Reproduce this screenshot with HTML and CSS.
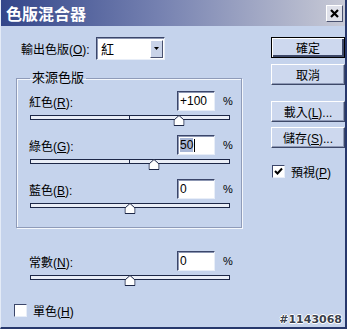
FILE: index.html
```html
<!DOCTYPE html>
<html lang="zh-Hant">
<head>
    <meta charset="UTF-8">
    <meta name="viewport" content="width=device-width, initial-scale=1.0">
    <title>色版混合器</title>
    <link rel="stylesheet" href="styles.css">
</head>
<body>

    <div class="window">
        <div class="titlebar">
            <span class="title">色版混合器</span>
            <span class="close">
                <svg width="9" height="9" viewBox="0 0 9 9"><path d="M1 1 L8 8 M8 1 L1 8" stroke="#000" stroke-width="2.2"/></svg>
            </span>
        </div>

        <div class="content">
            <div class="left">
                <div class="out-row">
                    <span class="out-label">輸出色版(<u>O</u>):</span>
                    <div class="select">
                        <span class="select-value">紅</span>
                        <span class="select-arrow">
                            <svg width="5" height="3" viewBox="0 0 5 3"><path d="M0 0 H5 L2.5 3 Z" fill="#000"/></svg>
                        </span>
                    </div>
                </div>

                <fieldset class="group">
                    <legend>來源色版</legend>

                    <div class="channel">
                        <div class="channel-row">
                            <span class="channel-label">紅色(<u>R</u>):</span>
                            <span class="field">+100</span>
                            <span class="pct">%</span>
                        </div>
                        <div class="slider">
                            <span class="tick"></span>
                            <span class="thumb" style="left: 74.5%"><svg width="11" height="11" viewBox="0 0 11 11"><path d="M5.5 0.5 L10.5 5 V10.5 H0.5 V5 Z" fill="#fff" stroke="#1d2747"/></svg></span>
                        </div>
                    </div>

                    <div class="channel">
                        <div class="channel-row">
                            <span class="channel-label">綠色(<u>G</u>):</span>
                            <span class="field"><span class="selected">50</span><span class="caret"></span></span>
                            <span class="pct">%</span>
                        </div>
                        <div class="slider">
                            <span class="tick"></span>
                            <span class="thumb" style="left: 62%"><svg width="11" height="11" viewBox="0 0 11 11"><path d="M5.5 0.5 L10.5 5 V10.5 H0.5 V5 Z" fill="#fff" stroke="#1d2747"/></svg></span>
                        </div>
                    </div>

                    <div class="channel">
                        <div class="channel-row">
                            <span class="channel-label">藍色(<u>B</u>):</span>
                            <span class="field">0</span>
                            <span class="pct">%</span>
                        </div>
                        <div class="slider">
                            <span class="thumb" style="left: 50%"><svg width="11" height="11" viewBox="0 0 11 11"><path d="M5.5 0.5 L10.5 5 V10.5 H0.5 V5 Z" fill="#fff" stroke="#1d2747"/></svg></span>
                        </div>
                    </div>
                </fieldset>

                <div class="channel constant">
                    <div class="channel-row">
                        <span class="channel-label">常數(<u>N</u>):</span>
                        <span class="field">0</span>
                        <span class="pct">%</span>
                    </div>
                    <div class="slider">
                        <span class="thumb" style="left: 50%"><svg width="11" height="11" viewBox="0 0 11 11"><path d="M5.5 0.5 L10.5 5 V10.5 H0.5 V5 Z" fill="#fff" stroke="#1d2747"/></svg></span>
                    </div>
                </div>

                <div class="check mono">
                    <span class="box"></span>
                    <span>單色(<u>H</u>)</span>
                </div>
            </div>

            <div class="right">
                <button class="btn default">確定</button>
                <button class="btn cancel">取消</button>
                <button class="btn load">載入(<u>L</u>)...</button>
                <button class="btn save">儲存(<u>S</u>)...</button>
                <div class="check preview">
                    <span class="box">
                        <svg width="9" height="9" viewBox="0 0 9 9"><path d="M1 4 L3.5 6.5 L8 1.5" stroke="#000" stroke-width="2" fill="none"/></svg>
                    </span>
                    <span>預視(<u>P</u>)</span>
                </div>
            </div>
        </div>

        <span class="watermark">#1143068</span>
    </div>

</body>
</html>
```

FILE: styles.css
```css
body {
    margin: 0;
    overflow: hidden;
    font-family: "Liberation Sans", "Noto Sans CJK TC", sans-serif;
    font-size: 12px;
    color: #000;
}

.window {
    position: relative;
    width: 347px;
    height: 329px;
    box-sizing: border-box;
    background: #c5d3ec;
    border-left: 1px solid #e4ebf7;
    border-right: 2px solid #27386c;
    border-bottom: 2px solid #27386c;
    display: flex;
    flex-direction: column;
}

.titlebar {
    height: 26px;
    flex: none;
    display: flex;
    align-items: center;
    justify-content: space-between;
    padding: 0 2px 0 5px;
    background: linear-gradient(to right, #33468a, #7480b0 45%, #c8cad6);
}

.title {
    color: #fff;
    font-size: 16px;
    font-weight: bold;
}

.close {
    width: 17px;
    height: 17px;
    box-sizing: border-box;
    display: flex;
    align-items: center;
    justify-content: center;
    background: #dfe1ea;
    border: 1px solid;
    border-color: #fff #4a5270 #4a5270 #fff;
}

.content {
    display: flex;
    padding-top: 11px;
}

.left {
    width: 246px;
    padding-left: 12px;
}

/* output channel row */
.out-row {
    display: flex;
    align-items: center;
    margin-left: 8px;
}

.out-label {
    width: 75px;
}

.select {
    width: 69px;
    height: 23px;
    box-sizing: border-box;
    display: flex;
    align-items: center;
    justify-content: space-between;
    background: #fff;
    border: 1px solid;
    border-color: #3b466a #e8eef8 #e8eef8 #3b466a;
    box-shadow: inset 1px 1px 0 #8c96b2;
    padding: 0 1px 0 4px;
}

.select-value {
    font-size: 13px;
}

.select-arrow {
    width: 13px;
    height: 18px;
    box-sizing: border-box;
    display: flex;
    align-items: center;
    justify-content: center;
    background: #c9d3e8;
    border: 1px solid;
    border-color: #fff #4a5270 #4a5270 #fff;
}

/* group box */
.group {
    margin: 11px 0 0 3px;
    width: 226px;
    box-sizing: border-box;
    padding: 6px 0 19px 12px;
    border: 1px solid #8f9bb9;
    box-shadow: inset 1px 1px 0 #f4f7fc, 1px 1px 0 #f4f7fc;
}

.group legend {
    padding: 0 2px;
    margin-left: 1px;
    font-size: 13px;
    line-height: 14px;
}

.group .channel + .channel {
    margin-top: 15px;
}

/* channel rows */
.channel-row {
    display: flex;
    align-items: center;
    height: 20px;
}

.channel-label {
    width: 148px;
}

.field {
    width: 38px;
    height: 20px;
    box-sizing: border-box;
    display: flex;
    align-items: center;
    padding-left: 2px;
    background: #fff;
    border: 1px solid;
    border-color: #3b466a #e8eef8 #e8eef8 #3b466a;
    box-shadow: inset 1px 1px 0 #8c96b2;
}

.selected {
    background: #a9b7d6;
}

.caret {
    width: 1px;
    height: 13px;
    background: #000;
    margin-left: 1px;
}

.pct {
    margin-left: 8px;
    font-size: 11px;
}

.slider {
    position: relative;
    width: 200px;
    height: 5px;
    box-sizing: border-box;
    margin: 4px 0 0 1px;
    background: #eaeef7;
    border: 1px solid #1d2747;
}

.tick {
    position: absolute;
    left: 98px;
    top: 0;
    width: 1px;
    height: 3px;
    background: #1d2747;
}

.thumb {
    position: absolute;
    top: -1px;
    width: 11px;
    height: 11px;
    transform: translateX(-50%);
}

.thumb svg {
    display: block;
}

.constant {
    margin: 23px 0 0 16px;
}

/* checkboxes */
.check {
    display: flex;
    align-items: center;
    gap: 6px;
}

.box {
    width: 13px;
    height: 13px;
    box-sizing: border-box;
    display: flex;
    align-items: center;
    justify-content: center;
    background: #fff;
    border: 1px solid;
    border-color: #3b466a #e8eef8 #e8eef8 #3b466a;
}

.mono {
    margin: 22px 0 0 1px;
}

/* right column buttons */
.right {
    display: flex;
    flex-direction: column;
    padding-left: 13px;
}

.btn {
    width: 74px;
    height: 21px;
    box-sizing: border-box;
    padding: 0;
    font-family: inherit;
    font-size: 12px;
    color: #000;
    background: #cdd8ee;
    border: 1px solid;
    border-color: #fff #3d4868 #3d4868 #fff;
    box-shadow: inset -1px -1px 0 #8e99b6;
}

.btn.default {
    border: 1px solid #000;
    box-shadow: inset 1px 1px 0 #fff, inset -2px -2px 0 #3d4868;
}

.cancel {
    margin-top: 6px;
}

.load {
    margin-top: 16px;
}

.save {
    margin-top: 5px;
}

.preview {
    margin: 15px 0 0 1px;
}

.watermark {
    position: absolute;
    right: 3px;
    bottom: 1px;
    font-family: "DejaVu Sans", sans-serif;
    font-size: 11px;
    font-weight: bold;
    color: #3a3f4c;
    text-shadow: 1px 0 0 #fff, -1px 0 0 #fff, 0 1px 0 #fff, 0 -1px 0 #fff;
}
```
